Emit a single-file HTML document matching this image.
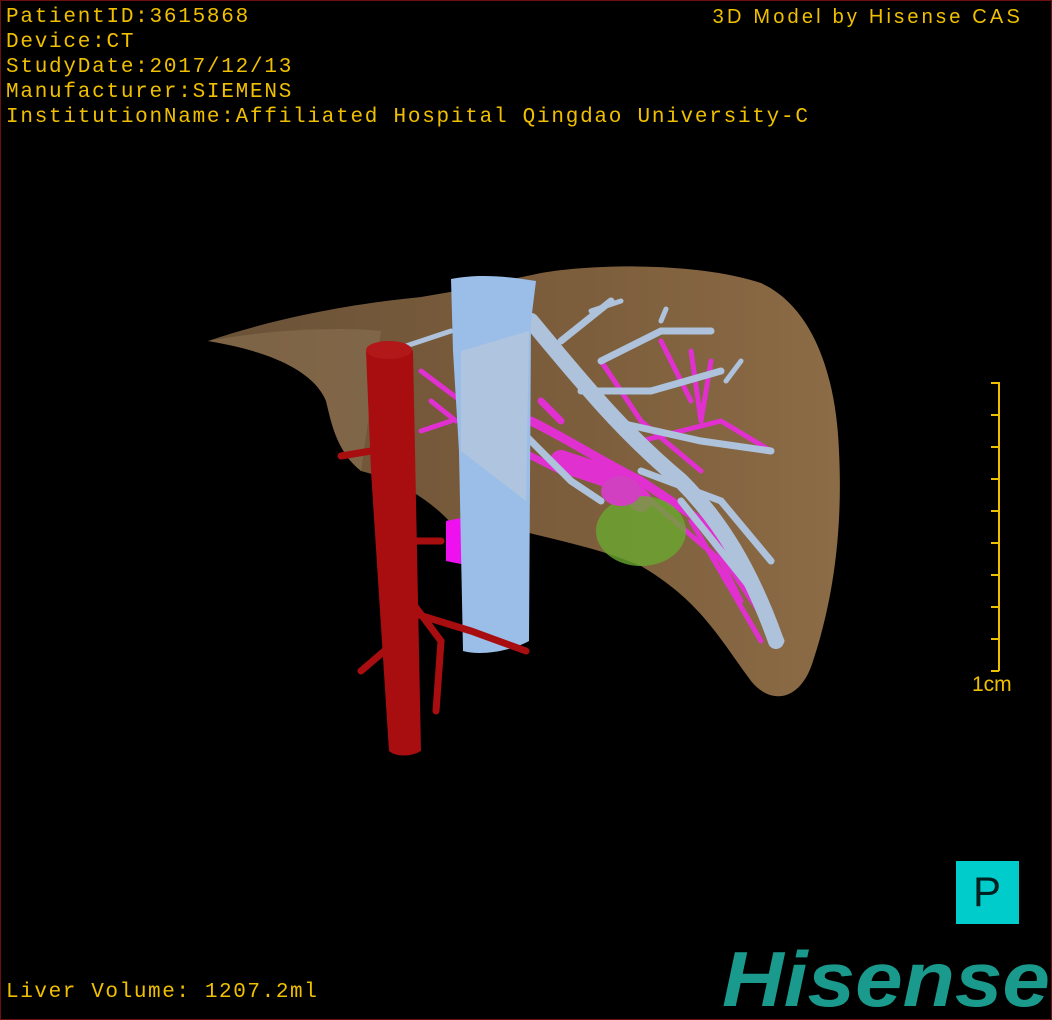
<!DOCTYPE html>
<html><head><meta charset="utf-8"><style>
html,body{margin:0;padding:0;background:#000}
#s{position:relative;width:1050px;height:1018px;border:1px solid #6e1010;overflow:hidden;background:#000;font-family:"Liberation Mono","DejaVu Sans Mono",monospace}
.t{position:absolute;color:#f0c000;font-size:21px;line-height:25px;white-space:pre;letter-spacing:1.75px}
</style></head><body><div id="s">
<div class="t" style="left:5px;top:4px">PatientID:3615868<br>Device:CT<br>StudyDate:2017/12/13<br>Manufacturer:SIEMENS<br>InstitutionName:Affiliated Hospital Qingdao University-C</div>
<div class="t" style="right:28px;top:4px;font-family:'Liberation Sans',sans-serif;font-size:20px;letter-spacing:3.2px">3D Model by Hisense CAS</div>
<div class="t" style="left:5px;top:979px;letter-spacing:1.6px">Liver Volume: 1207.2ml</div>
<svg width="1050" height="1018" style="position:absolute;left:0;top:0">
<defs><linearGradient id="lv" x1="0" x2="1"><stop offset="0" stop-color="#6a5238"/><stop offset="0.6" stop-color="#7d5e3c"/><stop offset="1" stop-color="#8c6c46"/></linearGradient></defs>
<path d="M207,340 C260,322 330,305 420,296 L455,290 L540,272 C600,262 700,262 760,282 C810,305 835,370 838,450 C842,530 832,600 812,660 C800,700 770,705 750,680 C720,640 700,600 640,565 C600,548 560,540 520,530 L450,522 C430,500 400,480 360,470 C335,450 330,420 325,400 C315,375 280,352 207,340 Z" fill="url(#lv)"/>
<path d="M207,340 C260,330 330,325 380,330 L360,470 C335,450 330,420 325,400 C315,375 280,352 207,340Z" fill="#8b7052" opacity="0.6"/>
<g stroke="#e030d0" stroke-linecap="round" fill="none">
<path d="M420,370 L460,400 M430,400 L455,420 M420,430 L450,420" stroke-width="5"/>
<path d="M530,420 C570,440 600,460 640,480 L700,520 L760,610" stroke-width="9"/>
<path d="M560,460 L620,480 L640,500" stroke-width="22"/>
<path d="M600,360 L640,420 L700,470 M660,340 L690,400 M690,350 L700,420 M710,360 L700,420 M640,440 L720,420 L770,450 M650,500 L720,560 L740,600 M690,520 L760,640" stroke-width="5"/>
<path d="M540,400 L560,420 M520,450 L560,470" stroke-width="7"/>
</g>
<path d="M445,520 L470,515 L470,565 L445,560 Z" fill="#ee10ee"/>
<ellipse cx="640" cy="530" rx="45" ry="35" fill="#6aa830" opacity="0.8"/>
<ellipse cx="620" cy="490" rx="20" ry="15" fill="#d040c0"/>
<g stroke="#aec2dc" stroke-linecap="round" fill="none">
<path d="M530,320 C580,380 620,430 680,480 C720,520 750,570 775,640" stroke-width="16"/>
<path d="M560,340 L610,300 M600,360 L660,330 L710,330 M580,390 L650,390 L720,370 M610,420 L700,440 L770,450 M640,470 L720,500 L770,560 M680,500 L760,600 L780,640 M520,430 L570,480 L600,500" stroke-width="7"/>
<path d="M450,330 L420,340 L390,350 M590,310 L620,300 M660,320 L665,308 M740,360 L725,380" stroke-width="5"/>
</g>
<path d="M450,278 C480,272 510,276 535,280 L530,320 L528,640 C510,650 480,655 462,650 L458,450 L452,350 Z" fill="#9bbee8"/>
<path d="M460,350 L528,330 L525,500 L460,450Z" fill="#b4c6dc" opacity="0.8"/>
<g stroke="#a80e10" stroke-linecap="round" fill="none">
<path d="M410,600 L440,640 L435,710 M405,610 L470,630 L525,650 M395,640 L360,670 M380,540 L440,540 M370,450 L340,455" stroke-width="7"/>
</g>
<path d="M365,350 C380,340 405,340 412,350 L420,750 C410,756 395,756 388,750 L370,470 Z" fill="#a80e10"/>
<ellipse cx="388" cy="349" rx="23" ry="9" fill="#b21818"/>
<g stroke="#f0c000" stroke-width="2">
<line x1="998" y1="381" x2="998" y2="670"/>
<path d="M990,382H998M990,414H998M990,446H998M990,478H998M990,510H998M990,542H998M990,574H998M990,606H998M990,638H998M990,670H998"/>
</g>
<text x="971" y="690" fill="#f0c000" font-family="Liberation Sans,sans-serif" font-size="21">1cm</text>
<rect x="955" y="860" width="63" height="63" fill="#00cccc"/>
<text x="986" y="905" fill="#002020" text-anchor="middle" font-family="Liberation Sans,sans-serif" font-size="42">P</text>
<text x="1049" y="1005" fill="#1a9a8c" text-anchor="end" font-family="Liberation Sans,sans-serif" font-weight="bold" font-style="italic" font-size="78" textLength="328" lengthAdjust="spacingAndGlyphs">Hisense</text>
</svg>
</div></body></html>
